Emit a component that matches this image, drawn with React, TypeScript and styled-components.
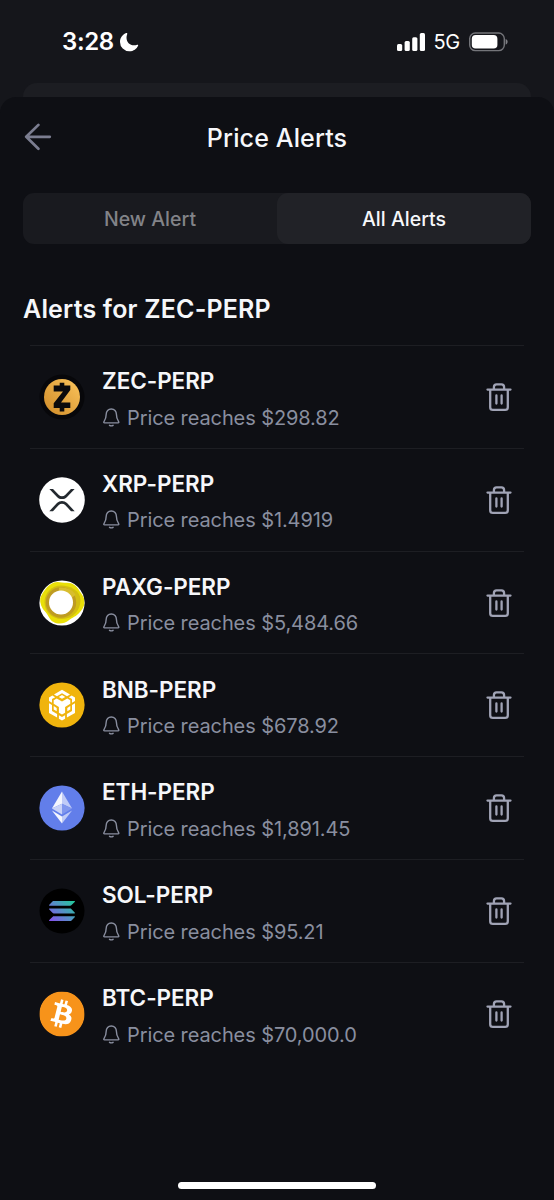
import React from "react";
import styled, { createGlobalStyle } from "styled-components";
import { SiBitcoin } from "react-icons/si";

const GlobalStyle = createGlobalStyle`
  *, *::before, *::after { box-sizing: border-box; }
  body {
    margin: 0;
    background: #15161b;
    font-family: Inter, "Liberation Sans", sans-serif;
    -webkit-font-smoothing: antialiased;
  }
`;

const Screen = styled.div`
  width: 554px;
  height: 1200px;
  display: flex;
  flex-direction: column;
  overflow: hidden;
  background: #15161b;
  color: #f6f7fa;
`;

const StatusBar = styled.header`
  height: 83px;
  padding: 0 46px 0 62px;
  display: flex;
  align-items: center;
  justify-content: space-between;
`;

const StatusGroup = styled.div<{ $gap: number }>`
  display: flex;
  align-items: center;
  gap: ${(p) => p.$gap}px;
  color: #fff;
`;

const Clock = styled.span`
  font-size: 24px;
  line-height: 30px;
  font-weight: 600;
  letter-spacing: -0.35px;
`;

const Network = styled.span`
  font-size: 20px;
  line-height: 26px;
  letter-spacing: -0.3px;
`;

const CardBehind = styled.div`
  height: 14px;
  margin: 0 23px;
  border-radius: 14px 14px 0 0;
  background: #1c1d22;
`;

const Sheet = styled.main`
  flex: 1;
  display: flex;
  flex-direction: column;
  border-radius: 16px 16px 0 0;
  background: #0e0f14;
`;

const SheetHeader = styled.div`
  height: 80px;
  padding: 0 24px;
  display: grid;
  grid-template-columns: 28px 1fr 28px;
  align-items: center;
`;

const BackButton = styled.button`
  display: flex;
  padding: 0;
  border: 0;
  background: none;
  color: #7b7d90;
`;

const Title = styled.h1`
  margin: 0;
  padding-top: 1px;
  text-align: center;
  font-size: 25px;
  line-height: 30px;
  font-weight: 500;
  letter-spacing: 0.14px;
`;

const Tabs = styled.div`
  height: 50.5px;
  margin: 16px 23px 0;
  display: grid;
  grid-template-columns: 1fr 1fr;
  border-radius: 11px;
  background: #191a1f;
`;

const Tab = styled.button<{ $active?: boolean }>`
  padding: 1px 0 0;
  border: 0;
  border-radius: 11px;
  background: ${(p) => (p.$active ? "#212227" : "transparent")};
  color: ${(p) => (p.$active ? "#f6f7fa" : "#828388")};
  font: 500 19.5px/24px Inter, "Liberation Sans", sans-serif;
  letter-spacing: 0.02px;
`;

const SectionTitle = styled.h2`
  margin: 49.500px 23px 0;
  font-size: 25px;
  line-height: 32px;
  font-weight: 600;
  letter-spacing: 0.19px;
`;

const AlertList = styled.ul`
  margin: 20px 30px 0;
  padding: 0;
  list-style: none;
`;

const AlertRow = styled.li`
  height: 102.83px;
  padding: 0 12px 0 9px;
  display: flex;
  align-items: center;
  border-top: 1.5px solid #1d1e23;
`;

const CoinIcon = styled.svg`
  width: 46px;
  height: 46px;
  flex: none;
`;

const AlertText = styled.div`
  flex: 1;
  margin-left: 17px;
  padding-top: 5px;
`;

const Pair = styled.div`
  font-size: 22.5px;
  line-height: 28px;
  font-weight: 600;
  letter-spacing: -0.05px;
`;

const Condition = styled.div`
  margin-top: 8.500px;
  display: flex;
  align-items: center;
  gap: 7px;
  color: #898e9f;
  font-size: 20px;
  line-height: 28px;
  letter-spacing: -0.1px;
`;

const DeleteButton = styled.button`
  display: flex;
  padding: 0;
  border: 0;
  background: none;
  color: #a0a3b5;
`;

const HomeArea = styled.footer`
  margin-top: auto;
  padding-bottom: 11px;
  display: flex;
  justify-content: center;
`;

const HomeIndicator = styled.div`
  width: 198px;
  height: 7px;
  border-radius: 4px;
  background: #fff;
`;

const Moon = () => (
  <svg width="20" height="20" viewBox="0 0 20 20">
    <path fill="currentColor" d="M7.2 1.1C4 2.3 1 5.6 1 10a9.3 9.3 0 0 0 9.3 9.3c4.3 0 7.4-2.6 8.8-5.6.3-.8-.3-1.2-1-.9-1 .4-2 .5-3 .5-4.500 0-7.600-3.200-7.600-7.600 0-1.200.2-2.300.7-3.500.300-.8-.2-1.400-1-1.100z" />
  </svg>
);

const Signal = () => (
  <svg width="28" height="18" viewBox="0 0 28 18" fill="currentColor">
    <rect x="0" y="11" width="5.200" height="7" rx="1.500" />
    <rect x="7.600" y="8" width="5.200" height="10" rx="1.500" />
    <rect x="15.200" y="4.200" width="5.200" height="13.800" rx="1.500" />
    <rect x="22.800" y="0" width="5.200" height="18" rx="1.500" />
  </svg>
);

const Battery = () => (
  <svg width="39" height="20" viewBox="0 0 39 20">
    <rect x="0.700" y="1" width="34.600" height="17.600" rx="5.600" fill="none" stroke="#74757a" strokeWidth="1.400" />
    <rect x="2.800" y="3" width="25.600" height="13.600" rx="3.800" fill="#fff" />
    <path d="M36.600 7v5.600c1.200-.4 2-1.500 2-2.800s-.8-2.400-2-2.800z" fill="#808186" />
  </svg>
);

const BackArrow = () => (
  <svg width="28" height="28" viewBox="0 0 28 28" fill="none" stroke="currentColor" strokeWidth="2.700" strokeLinecap="round" strokeLinejoin="round">
    <path d="M14.400 1.900 2.200 13.800l12.200 12M2.600 13.800h23.200" />
  </svg>
);

const Bell = () => (
  <svg width="18" height="20" viewBox="0 0 18 20" fill="none" stroke="currentColor" strokeWidth="1.400" strokeLinecap="round" strokeLinejoin="round">
    <path d="M9.300 1C6.200 1 4.200 3.300 4.200 6.300c0 3.900-.8 5.400-2.200 7.300-.5.700-.2 1.300.5 1.300h13.600c.7 0 1-.6.5-1.300-1.400-1.900-2.200-3.400-2.200-7.300 0-3-2-5.300-5.100-5.300zM7.500 17.300q1.800 1.200 3.600 0" />
  </svg>
);

const Trash = () => (
  <svg width="26" height="30" viewBox="0 0 26 30" fill="none" stroke="currentColor" strokeWidth="2.300" strokeLinecap="round" strokeLinejoin="round">
    <path d="M1.500 7.600h23M7.900 7.600V5.200c0-1.700 1-2.900 2.700-2.900h4.800c1.700 0 2.700 1.200 2.700 2.900v2.400M4.200 7.600v17.600c0 1.700 1 2.700 2.700 2.700h12.200c1.700 0 2.700-1 2.700-2.700V7.600M10.400 13.500v8M15.600 13.500v8" />
  </svg>
);

const Zcash = () => (
  <CoinIcon viewBox="0 0 46 46">
    <defs>
      <linearGradient id="zec" x1="0" y1="1" x2="1" y2="0">
        <stop offset="0" stopColor="#cf8b28" />
        <stop offset="1" stopColor="#fbc45c" />
      </linearGradient>
    </defs>
    <circle cx="23" cy="23" r="22.500" fill="#07070a" />
    <circle cx="23" cy="23" r="18" fill="url(#zec)" />
    <path fill="#0b0a0c" d="M20.700 8.800h4.600v2.800h6v4.500L22 28.400h9.300V34h-6v3.500h-4.600V34h-6v-4.700L24 17.400h-9.300v-5.800h6z" />
  </CoinIcon>
);

const Xrp = () => (
  <CoinIcon viewBox="0 0 46 46">
    <circle cx="23" cy="23" r="22.800" fill="#fff" />
    <g transform="translate(10.300 11.900) scale(.0496 .0525)" fill="#23292f">
      <path d="M437 0h74L357 152.480c-55.770 55.190-146.190 55.190-202 0L.94 0H75l117 115.830a91.110 91.110 0 0 0 127.910 0z" />
      <path d="M74.050 424H0l155-153.420c55.770-55.190 146.190-55.190 202 0L512 424h-74L320 307.230a91.110 91.110 0 0 0-127.910 0z" />
    </g>
  </CoinIcon>
);

const PaxGold = () => (
  <CoinIcon viewBox="0 0 46 46">
    <defs>
      <clipPath id="paxg">
        <circle cx="23" cy="23" r="22.600" />
      </clipPath>
    </defs>
    <circle cx="23" cy="23" r="22.600" fill="#fff" />
    <g clipPath="url(#paxg)">
      <path fill="#e9df08" d="M15 2.500c4-1.500 8 .3 13 .2 6 0 9.500 3.300 12 7.300 1.500 3 5 6 5.500 10.500.3 5-1.500 8-4.500 11.500-3.500 4.500-8 5.500-11.500 8.500-3.500 2.800-10 4.500-15 1.500-4-2-4.500-6-8-10C2.500 28 .7 23.500 1.200 18 3.800 12.500 8 5 15 2.500z" />
      <path fill="#d3bd12" d="M22 5.500c9 0 19.500 5 19.500 14.500 0 10-7.500 19-18.500 19S5.500 31 5.500 22 13 5.500 22 5.500z" />
      <circle cx="22" cy="22.500" r="15.200" fill="#bf9c22" />
      <path fill="#d8bd2e" d="M20 7.800c6-1 14 2 16.500 7l-3.500 3c-3-5-8-6.500-13-5.500z" />
      <circle cx="22" cy="22.500" r="12" fill="#fff" />
    </g>
  </CoinIcon>
);

const Bnb = () => (
  <CoinIcon viewBox="0 0 46 46">
    <circle cx="23" cy="23" r="22.600" fill="#f0b40d" />
    <g fill="#fff">
      <path d="m15 12.500 8-4.700 8 4.700-3 1.700-5-2.900-5 2.900z" />
      <path d="m19.800 14.900 3.200-1.800 3.200 1.800-3.200 1.900z" />
      <path d="m13.300 13.500 2.900 1.700-3.200 1.900v3.600l-3-1.800v-3.500zM32.700 13.500l-2.900 1.700 3.200 1.900v3.600l3-1.800v-3.500z" />
      <path d="m14.700 18.200 3-1.800 5.300 3.200 5.300-3.200 3 1.800v3.500l-5.200 3.200v5.800L23 32.500l-3.100-1.800v-5.800l-5.200-3.200z" />
      <path d="m10 21.300 3 1.800v6l5.100 3v3.500L10 30.900zM36 21.300l-3 1.800v6l-5.100 3v3.500l8.100-4.700z" />
      <path d="m14.700 24.100 3 1.800v3.300l-3-1.800zM31.300 24.100l-3 1.800v3.300l3-1.800z" />
      <path d="m19.900 33.200 3.100 1.800 3.100-1.800v3.500L23 38.500l-3.100-1.800z" />
    </g>
  </CoinIcon>
);

const Ethereum = () => (
  <CoinIcon viewBox="0 0 46 46">
    <circle cx="23" cy="23" r="22.600" fill="#627eea" />
    <path fill="#f4f6fe" d="M23 6.400v12.400l-10.100 4.600z" />
    <path fill="#c0cbf7" d="M23 6.400v12.400l10.100 4.600z" />
    <path fill="#c9d2f8" d="M23 18.800v10.600l-10.100-6z" />
    <path fill="#8197ee" d="M23 18.800v10.600l10.100-6z" />
    <path fill="#f4f6fe" d="M23 31.400v7.100L12.900 25.400z" />
    <path fill="#c0cbf7" d="M23 31.400v7.100l10.100-13.100z" />
  </CoinIcon>
);

const Solana = () => (
  <CoinIcon viewBox="0 0 46 46">
    <defs>
      <linearGradient id="sol" gradientUnits="userSpaceOnUse" x1="12" y1="34" x2="34" y2="12">
        <stop offset="0" stopColor="#8752ed" />
        <stop offset="0.500" stopColor="#568fc7" />
        <stop offset="1" stopColor="#22c99a" />
      </linearGradient>
    </defs>
    <circle cx="23" cy="23" r="22.500" fill="#000" />
    <g fill="url(#sol)">
      <path d="M14.700 12.900h20.600c.6 0 .8.600.4 1l-3.400 3.400c-.3.300-.6.400-1 .4H10.700c-.6 0-.8-.6-.4-1l3.400-3.400c.3-.3.600-.4 1-.4z" />
      <path d="M10.700 20.600h20.600c.4 0 .7.100 1 .4l3.400 3.400c.4.400.2 1-.4 1H14.700c-.4 0-.7-.1-1-.4L10.300 21.600c-.4-.4-.2-1 .4-1z" />
      <path d="M14.700 28.300h20.600c.6 0 .8.600.4 1l-3.400 3.400c-.3.300-.6.400-1 .4H10.700c-.6 0-.8-.6-.4-1l3.400-3.400c.3-.3.600-.4 1-.4z" />
    </g>
  </CoinIcon>
);

const Bitcoin = () => (
  <CoinIcon viewBox="0 0 46 46">
    <circle cx="23" cy="23" r="22" fill="#fff" />
    <SiBitcoin x={0.4} y={0.4} size={45.2} color="#f7931a" />
  </CoinIcon>
);

const alerts = [
  { pair: "ZEC-PERP", price: "$298.82", Icon: Zcash },
  { pair: "XRP-PERP", price: "$1.4919", Icon: Xrp },
  { pair: "PAXG-PERP", price: "$5,484.66", Icon: PaxGold },
  { pair: "BNB-PERP", price: "$678.92", Icon: Bnb },
  { pair: "ETH-PERP", price: "$1,891.45", Icon: Ethereum },
  { pair: "SOL-PERP", price: "$95.21", Icon: Solana },
  { pair: "BTC-PERP", price: "$70,000.0", Icon: Bitcoin },
];

export default function App() {
  return (
    <Screen>
      <GlobalStyle />
      <StatusBar>
        <StatusGroup $gap={5}>
          <Clock>3:28</Clock>
          <Moon />
        </StatusGroup>
        <StatusGroup $gap={9}>
          <Signal />
          <Network>5G</Network>
          <Battery />
        </StatusGroup>
      </StatusBar>
      <CardBehind />
      <Sheet>
        <SheetHeader>
          <BackButton aria-label="Back">
            <BackArrow />
          </BackButton>
          <Title>Price Alerts</Title>
        </SheetHeader>
        <Tabs>
          <Tab>New Alert</Tab>
          <Tab $active>All Alerts</Tab>
        </Tabs>
        <SectionTitle>Alerts for ZEC-PERP</SectionTitle>
        <AlertList>
          {alerts.map(({ pair, price, Icon }) => (
            <AlertRow key={pair}>
              <Icon />
              <AlertText>
                <Pair>{pair}</Pair>
                <Condition>
                  <Bell />
                  <span>Price reaches {price}</span>
                </Condition>
              </AlertText>
              <DeleteButton aria-label={`Delete ${pair} alert`}>
                <Trash />
              </DeleteButton>
            </AlertRow>
          ))}
        </AlertList>
        <HomeArea>
          <HomeIndicator />
        </HomeArea>
      </Sheet>
    </Screen>
  );
}
